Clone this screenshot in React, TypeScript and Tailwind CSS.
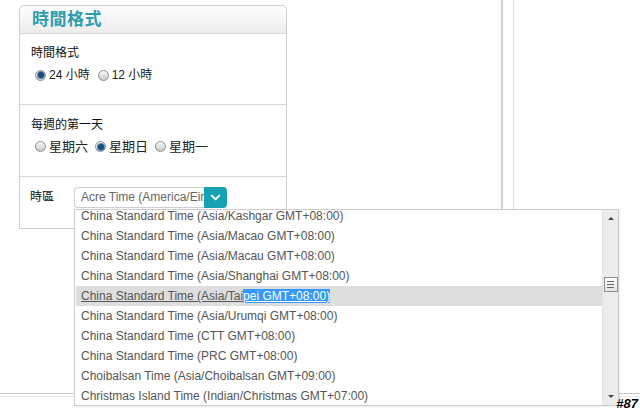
import { ChevronDown } from "lucide-react";

const zones = [
  "China Standard Time (Asia/Kashgar GMT+08:00)",
  "China Standard Time (Asia/Macao GMT+08:00)",
  "China Standard Time (Asia/Macau GMT+08:00)",
  "China Standard Time (Asia/Shanghai GMT+08:00)",
  "China Standard Time (Asia/Taipei GMT+08:00)",
  "China Standard Time (Asia/Urumqi GMT+08:00)",
  "China Standard Time (CTT GMT+08:00)",
  "China Standard Time (PRC GMT+08:00)",
  "Choibalsan Time (Asia/Choibalsan GMT+09:00)",
  "Christmas Island Time (Indian/Christmas GMT+07:00)",
];

function Radio({ checked }: { checked?: boolean }) {
  return (
    <span className="w-[11px] h-[11px] rounded-full border border-[#8e8e8e] bg-gradient-to-b from-[#fafafa] to-[#c9c9c9] flex items-center justify-center shrink-0">
      {checked && <span className="w-[6px] h-[6px] rounded-full bg-[#1d4a78] ring-1 ring-[#5d8fc0]" />}
    </span>
  );
}

function Option({ label, checked }: { label: string; checked?: boolean }) {
  return (
    <label className="flex items-center gap-[3px]">
      <Radio checked={checked} />
      <span>{label}</span>
    </label>
  );
}

export default function App() {
  return (
    <div className="relative w-[640px] h-[413px] bg-white overflow-hidden font-['Liberation_Sans','Noto_Sans_CJK_TC',sans-serif] text-[12px] text-[#222]">
      <div className="flex h-[393px]">
        {/* Main column */}
        <div className="w-[503px] border-r-2 border-[#cfcfcf] pl-[19px] pt-[5px]">
          <div className="w-[268px] border border-[#cfcfcf] rounded-t-[5px] bg-white">
            {/* Header */}
            <div className="h-[28px] rounded-t-[5px] bg-gradient-to-b from-white to-[#ececec] border-b border-[#d6d6d6] pl-[12px] flex items-center">
              <h2 className="text-[17px] font-bold text-[#2a9db0] tracking-[0.5px]">時間格式</h2>
            </div>

            {/* 12/24 */}
            <div className="h-[71px] border-b border-[#d6d6d6] pl-[11px] pt-[12px]">
              <div className="leading-[14px] text-[#111]">時間格式</div>
              <div className="flex items-center gap-[8px] mt-[6px] pl-[4px] text-[12px]">
                <Option label="24 小時" checked />
                <Option label="12 小時" />
              </div>
            </div>

            {/* first day */}
            <div className="h-[72px] border-b border-[#d6d6d6] pl-[11px] pt-[13px]">
              <div className="leading-[14px] text-[#111]">每週的第一天</div>
              <div className="flex items-center gap-[7px] mt-[5px] pl-[4px] text-[13px]">
                <Option label="星期六" />
                <Option label="星期日" checked />
                <Option label="星期一" />
              </div>
            </div>

            {/* Timezone */}
            <div className="h-[51px] pl-[10px] pt-[10px] flex items-start gap-[20px]">
              <span className="mt-[3px] leading-[14px] text-[#111]">時區</span>
              <div className="relative flex h-[21px]">
                <div className="w-[130px] h-[21px] border border-[#cfcfcf] border-r-0 rounded-l-[4px] pl-[6px] text-[#666] leading-[19px] overflow-hidden whitespace-nowrap">
                  Acre Time (America/Eir
                </div>
                <div className="w-[23px] h-[21px] bg-[#17a2b2] rounded-r-[4px] flex items-center justify-center">
                  <ChevronDown className="w-[15px] h-[15px] text-white" strokeWidth={3} />
                </div>

                {/* Dropdown list */}
                <div className="absolute left-0 top-[22px] w-[545px] h-[197px] border border-[#cccccc] bg-white flex shadow-[1px_1px_2px_rgba(0,0,0,0.08)] z-10">
                  <div className="flex-1 overflow-hidden pl-[1px]">
                    <div className="-mt-[4px]">
                      {zones.map((z) =>
                        z.includes("Taipei") ? (
                          <div key={z} className="h-[20px] leading-[20px] pl-[5px] bg-[#dedede] text-[#555] whitespace-nowrap">
                            <span className="underline">China Standard Time (Asia/Tai</span>
                            <span className="underline bg-[#3399ff] text-white">pei GMT+08:00)</span>
                          </div>
                        ) : (
                          <div key={z} className="h-[20px] leading-[20px] pl-[5px] text-[#555] whitespace-nowrap">
                            {z}
                          </div>
                        )
                      )}
                    </div>
                  </div>
                  {/* Scrollbar */}
                  <div className="w-[16px] bg-[#ececec] border-l border-[#e2e2e2] flex flex-col items-center">
                    <div className="h-[17px] flex items-center justify-center">
                      <span className="w-0 h-0 border-l-[3px] border-r-[3px] border-b-[3px] border-l-transparent border-r-transparent border-b-[#444]" />
                    </div>
                    <div className="h-[50px]" />
                    <div className="w-[14px] h-[15px] border border-[#8f8f8f] bg-gradient-to-b from-white to-[#e4e4e4] flex flex-col items-center justify-center gap-[2px]">
                      <span className="w-[7px] h-px bg-[#666]" />
                      <span className="w-[7px] h-px bg-[#666]" />
                      <span className="w-[7px] h-px bg-[#666]" />
                    </div>
                    <div className="flex-1" />
                    <div className="h-[17px] flex items-center justify-center">
                      <span className="w-0 h-0 border-l-[3px] border-r-[3px] border-t-[3px] border-l-transparent border-r-transparent border-t-[#444]" />
                    </div>
                  </div>
                </div>
              </div>
            </div>
          </div>
        </div>
        <div className="w-[11px] border-r border-[#dedede]" />
        <div className="flex-1" />
      </div>
      <div className="border-t border-[#c8c8c8] h-[3px]" />
      <div className="border-t border-[#e6e6e6]" />

      <span className="absolute right-[2px] bottom-[3px] text-[13px] leading-[13px] font-bold italic text-black [text-shadow:0_0_1px_white] z-20">
        #87
      </span>
    </div>
  );
}
